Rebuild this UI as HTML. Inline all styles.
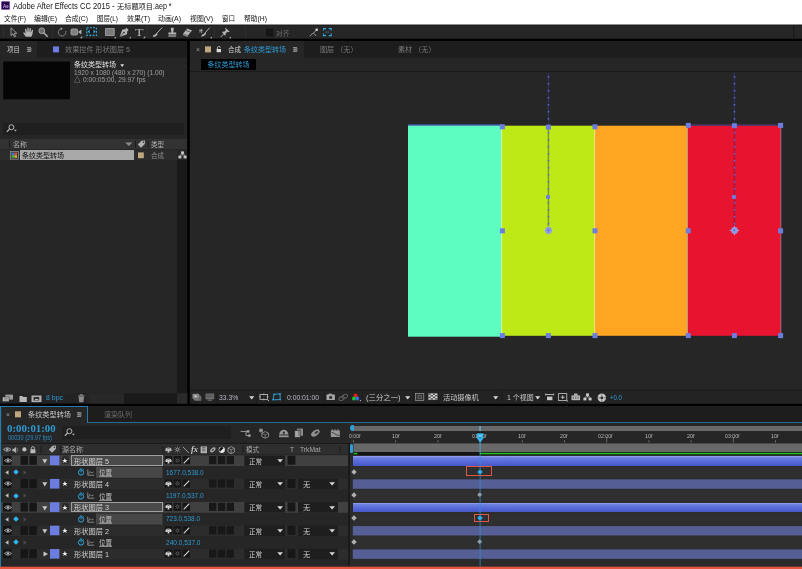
<!DOCTYPE html>
<html lang="zh-CN"><head><meta charset="utf-8"><title>Adobe After Effects CC 2015</title>
<style>
html,body{margin:0;padding:0;background:#262626;}
body{width:802px;height:569px;overflow:hidden;position:relative;font-family:"Liberation Sans","Noto Sans CJK SC",sans-serif;}
#r{position:absolute;left:0;top:0;width:802px;height:569px;background:#262626;filter:blur(0.35px);}
#r div,#r svg{position:absolute;}
.t{position:absolute;white-space:nowrap;line-height:12px;height:12px;transform-origin:0 50%;}
</style></head>
<body><div id="r">
<div style="left:0px;top:24px;width:802px;height:16px;background:#262626;"></div>
<svg style="left:0px;top:24px" width="802" height="2"><rect x="0" y="0.4" width="802" height="1" fill="#181818"/></svg>
<svg style="left:0px;top:0px" width="802" height="25"><rect x="0" y="0" width="802" height="24.5" fill="#ffffff"/></svg>
<svg style="left:0px;top:0px;" width="11" height="11" viewBox="0 0 11 11"><rect x="1.2" y="1.3" width="8.6" height="8.4" rx="0.6" fill="#230646" stroke="#c9a2f2" stroke-width="0.5"/></svg>
<span class="t" style="transform:scaleX(0.8109);left:2.7px;top:-0.5px;font-size:5.4px;color:#d2a6fa;font-weight:bold;">Ae</span>
<span class="t" style="transform:scaleX(0.8625);left:13px;top:0.3px;font-size:8.8px;color:#111;">Adobe After Effects CC 2015 -</span>
<span class="t" style="transform:scaleX(0.9738);left:116.8px;top:0.5px;font-size:7.4px;color:#111;">无标题项目</span>
<span class="t" style="transform:scaleX(0.8087);left:153.2px;top:0.3px;font-size:8.8px;color:#111;">.aep *</span>
<span class="t" style="transform:scaleX(0.9337);left:4px;top:12.8px;font-size:7.2px;color:#111;">文件(F)</span>
<span class="t" style="transform:scaleX(0.9596);left:34px;top:12.8px;font-size:7.2px;color:#111;">编辑(E)</span>
<span class="t" style="transform:scaleX(0.9442);left:65px;top:12.8px;font-size:7.2px;color:#111;">合成(C)</span>
<span class="t" style="transform:scaleX(0.9063);left:97px;top:12.8px;font-size:7.2px;color:#111;">图层(L)</span>
<span class="t" style="transform:scaleX(0.9761);left:127px;top:12.8px;font-size:7.2px;color:#111;">效果(T)</span>
<span class="t" style="transform:scaleX(0.9596);left:158px;top:12.8px;font-size:7.2px;color:#111;">动画(A)</span>
<span class="t" style="transform:scaleX(0.9596);left:190px;top:12.8px;font-size:7.2px;color:#111;">视图(V)</span>
<span class="t" style="transform:scaleX(0.9034);left:222px;top:12.8px;font-size:7.2px;color:#111;">窗口</span>
<span class="t" style="transform:scaleX(0.9442);left:244px;top:12.8px;font-size:7.2px;color:#111;">帮助(H)</span>
<svg style="left:0px;top:38px" width="802" height="4"><rect x="0" y="0.7" width="802" height="2.5" fill="#000"/></svg>
<svg style="left:0px;top:41px" width="187" height="17"><rect x="0" y="0" width="187" height="16.6" fill="#1d1d1d"/></svg>
<svg style="left:0px;top:41px" width="37" height="17"><rect x="0" y="0" width="37" height="16.6" fill="#262626"/></svg>
<svg style="left:187px;top:41px" width="3" height="365"><rect x="0.2" y="0" width="2.6" height="365" fill="#000"/></svg>
<svg style="left:190px;top:41px" width="612" height="17"><rect x="0" y="0" width="612" height="16.6" fill="#1d1d1d"/></svg>
<div style="left:190px;top:41px;width:114px;height:17px;background:#262626;"></div>
<span class="t" style="transform:scaleX(0.9286);left:7px;top:44.0px;font-size:7px;color:#c8c8c8;">项目</span>
<span class="t" style="transform:scaleX(1.2214);left:27px;top:44.0px;font-size:7px;color:#999;">≡</span>
<svg style="left:53px;top:46px" width="6" height="7"><rect x="0" y="0.4" width="6" height="6" fill="#6b7ee0"/></svg>
<span class="t" style="transform:scaleX(1.0189);left:65px;top:44.0px;font-size:7px;color:#7a7a7a;">效果控件 形状图层 5</span>
<span class="t" style="transform:scaleX(0.9771);left:195.5px;top:44.0px;font-size:7px;color:#999;">×</span>
<svg style="left:205px;top:46px" width="6" height="7"><rect x="0" y="0.4" width="6" height="6" fill="#bea87f"/></svg>
<span class="t" style="transform:scaleX(0.9286);left:228px;top:44.0px;font-size:7px;color:#d0d0d0;">合成</span>
<span class="t" style="transform:scaleX(1.0000);left:244px;top:44.0px;font-size:7px;color:#2d9ad4;">条纹类型转场</span>
<span class="t" style="transform:scaleX(1.2214);left:293px;top:44.0px;font-size:7px;color:#999;">≡</span>
<span class="t" style="transform:scaleX(1.0148);left:320px;top:44.0px;font-size:7px;color:#7a7a7a;">图层 （无）</span>
<span class="t" style="transform:scaleX(1.0148);left:398px;top:44.0px;font-size:7px;color:#7a7a7a;">素材 （无）</span>
<svg style="left:3px;top:61px" width="67" height="39"><rect x="0.2" y="0.5" width="66.8" height="37.8" fill="#050505"/></svg>
<span class="t" style="transform:scaleX(1.0000);left:74px;top:59.3px;font-size:7px;color:#e0e0e0;">条纹类型转场</span>
<svg style="left:120px;top:63.6px;" width="5" height="4" viewBox="0 0 5 4"><path d="M0.3 0.3H4.1L2.2 2.9Z" fill="#e0e0e0"/></svg>
<span class="t" style="transform:scaleX(0.8918);left:74px;top:66.6px;font-size:7.4px;color:#a0a0a0;">1920 x 1080  (480 x 270) (1.00)</span>
<span class="t" style="transform:scaleX(0.9286);left:74px;top:73.6px;font-size:7px;color:#b8b8b8;">△</span>
<span class="t" style="transform:scaleX(0.9028);left:82.8px;top:73.6px;font-size:7.4px;color:#a0a0a0;">0:00:05:00, 29.97 fps</span>
<div style="left:3px;top:123px;width:181px;height:12px;background:#1f1f1f;"></div>
<div style="left:0px;top:139px;width:187px;height:10px;background:#323232;"></div>
<div style="left:0px;top:150px;width:177px;height:10px;background:#2c2c2c;"></div>
<svg style="left:177px;top:160px" width="10" height="234"><rect x="0" y="0" width="10" height="233.4" fill="#191919"/></svg>
<span class="t" style="transform:scaleX(1.0769);left:13px;top:139.0px;font-size:6.5px;color:#b0b0b0;">名称</span>
<span class="t" style="transform:scaleX(1.0000);left:151px;top:139.0px;font-size:6.5px;color:#b0b0b0;">类型</span>
<div style="left:20px;top:150px;width:114px;height:10px;background:#a8a8a8;"></div>
<span class="t" style="transform:scaleX(1.0000);left:22px;top:150.0px;font-size:7px;color:#111;">条纹类型转场</span>
<svg style="left:138px;top:152px" width="6" height="7"><rect x="0" y="0.4" width="5.8" height="5.8" fill="#bea87f"/></svg>
<span class="t" style="transform:scaleX(1.0000);left:151px;top:150.0px;font-size:6.5px;color:#8a8a8a;">合成</span>
<svg style="left:0px;top:393px" width="188" height="11"><rect x="0" y="0.4" width="187.2" height="10.2" fill="#232323"/></svg>
<svg style="left:0px;top:403px" width="802" height="4"><rect x="0" y="0.6" width="802" height="2.6" fill="#000"/></svg>
<span class="t" style="transform:scaleX(0.9396);left:46px;top:392.3px;font-size:7.4px;color:#2d9ad4;">8 bpc</span>
<svg style="left:89px;top:393px" width="88" height="11"><rect x="0" y="0.4" width="88" height="10.2" fill="#1a1a1a"/></svg>
<svg style="left:89px;top:393px" width="35" height="11"><rect x="0" y="0.4" width="35" height="10.2" fill="#282828"/></svg>
<svg style="left:177px;top:393px" width="11" height="11"><rect x="0" y="0.4" width="10.2" height="10.2" fill="#2a2a2a"/></svg>
<div style="left:201px;top:59px;width:55px;height:11px;background:#000;"></div>
<span class="t" style="transform:scaleX(1.0000);left:207.5px;top:59.3px;font-size:7px;color:#2d9ad4;">条纹类型转场</span>
<div style="left:190px;top:71px;width:612px;height:1px;background:#1a1a1a;"></div>
<svg style="left:408px;top:125px" width="94" height="212"><rect x="0" y="0.3" width="93.5" height="211.4" fill="#5dfdc2"/></svg>
<svg style="left:501px;top:125px" width="94" height="211"><rect x="0.5" y="0.7" width="93" height="210.1" fill="#bde916"/></svg>
<svg style="left:594px;top:125px" width="94" height="211"><rect x="0.5" y="0.7" width="92.8" height="210.1" fill="#fea621"/></svg>
<svg style="left:687px;top:125px" width="94" height="211"><rect x="0.3" y="0.7" width="93.5" height="210.1" fill="#e8142f"/></svg>
<svg style="left:408px;top:124px" width="94" height="2"><rect x="0" y="0.3" width="93.5" height="1.2" fill="#4a58b8"/></svg>
<svg style="left:687px;top:124px" width="94" height="2"><rect x="0.3" y="0.5" width="93.5" height="1.3" fill="#5a3a7a"/></svg>
<svg style="left:501px;top:126px" width="2" height="210"><rect x="0.1" y="0" width="1" height="210" fill="#dff7b0"/></svg>
<svg style="left:594px;top:126px" width="2" height="210"><rect x="0.1" y="0" width="1" height="210" fill="#f2e68a"/></svg>
<svg style="left:686px;top:126px" width="2" height="210"><rect x="0.9" y="0" width="1" height="210" fill="#c9a08a"/></svg>
<svg style="left:780px;top:126px" width="2" height="210"><rect x="0.3" y="0" width="1" height="210" fill="#b06a80"/></svg>
<svg style="left:547px;top:72px" width="3" height="54"><rect x="0.7" y="0.5" width="1.4" height="53" fill="rgba(52,62,150,0.5)"/></svg>
<svg style="left:547px;top:125px" width="3" height="103"><rect x="0.7" y="0.5" width="1.4" height="102" fill="rgba(30,40,110,0.42)"/></svg>
<svg style="left:546.9px;top:76px;" width="3" height="152" viewBox="0 0 3 152"><line x1="1.5" y1="0.1" x2="1.5" y2="152" stroke="#5a6ad6" stroke-width="1.5" stroke-dasharray="1.5 5.5"/></svg>
<svg style="left:545.4px;top:193.6px;" width="6" height="6" viewBox="0 0 6 6"><circle cx="3" cy="3" r="2.2" fill="#6b7ee0"/></svg>
<svg style="left:542.9px;top:225.1px;" width="11" height="11" viewBox="0 0 11 11"><path d="M5.5 0.2L6.7 4.3L10.8 5.5L6.7 6.7L5.5 10.8L4.3 6.7L0.2 5.5L4.3 4.3Z" fill="#b4bce8"/><circle cx="5.5" cy="5.5" r="3.4" fill="#8f9ae6"/><circle cx="5.3" cy="5.3" r="1" fill="#6470c8"/></svg>
<svg style="left:733px;top:72px" width="3" height="54"><rect x="0.7" y="0.5" width="1.4" height="53" fill="rgba(52,62,150,0.5)"/></svg>
<svg style="left:733px;top:125px" width="3" height="103"><rect x="0.7" y="0.5" width="1.4" height="102" fill="rgba(30,40,110,0.42)"/></svg>
<svg style="left:732.9px;top:76px;" width="3" height="152" viewBox="0 0 3 152"><line x1="1.5" y1="0.1" x2="1.5" y2="152" stroke="#5a6ad6" stroke-width="1.5" stroke-dasharray="1.5 5.5"/></svg>
<svg style="left:731.4px;top:193.6px;" width="6" height="6" viewBox="0 0 6 6"><circle cx="3" cy="3" r="2.2" fill="#6b7ee0"/></svg>
<svg style="left:728.9px;top:225.1px;" width="11" height="11" viewBox="0 0 11 11"><path d="M5.5 0.2L6.7 4.3L10.8 5.5L6.7 6.7L5.5 10.8L4.3 6.7L0.2 5.5L4.3 4.3Z" fill="#b4bce8"/><circle cx="5.5" cy="5.5" r="3.4" fill="#8f9ae6"/><circle cx="5.3" cy="5.3" r="1" fill="#6470c8"/></svg>
<svg style="left:499px;top:124px" width="6" height="6"><rect x="0.9" y="0.3" width="5" height="5" fill="#6b7ee0"/></svg>
<svg style="left:592px;top:124px" width="6" height="6"><rect x="0.5" y="0.3" width="5" height="5" fill="#6b7ee0"/></svg>
<svg style="left:499px;top:228px" width="6" height="6"><rect x="0.9" y="0.3" width="5" height="5" fill="#6b7ee0"/></svg>
<svg style="left:592px;top:228px" width="6" height="6"><rect x="0.5" y="0.3" width="5" height="5" fill="#6b7ee0"/></svg>
<svg style="left:499px;top:333px" width="6" height="6"><rect x="0.9" y="0.1" width="5" height="5" fill="#6b7ee0"/></svg>
<svg style="left:592px;top:333px" width="6" height="6"><rect x="0.5" y="0.1" width="5" height="5" fill="#6b7ee0"/></svg>
<svg style="left:545px;top:124px" width="6" height="6"><rect x="0.9" y="0.6" width="5" height="5" fill="#6b7ee0"/></svg>
<svg style="left:545px;top:333px" width="6" height="6"><rect x="0.9" y="0.1" width="5" height="5" fill="#6b7ee0"/></svg>
<svg style="left:685px;top:122px" width="6" height="6"><rect x="0.8" y="0.9" width="5" height="5" fill="#6b7ee0"/></svg>
<svg style="left:778px;top:122px" width="6" height="6"><rect x="0.1" y="0.9" width="5" height="5" fill="#6b7ee0"/></svg>
<svg style="left:685px;top:228px" width="6" height="6"><rect x="0.8" y="0.3" width="5" height="5" fill="#6b7ee0"/></svg>
<svg style="left:778px;top:228px" width="6" height="6"><rect x="0.1" y="0.3" width="5" height="5" fill="#6b7ee0"/></svg>
<svg style="left:685px;top:333px" width="6" height="6"><rect x="0.8" y="0.1" width="5" height="5" fill="#6b7ee0"/></svg>
<svg style="left:778px;top:333px" width="6" height="6"><rect x="0.1" y="0.1" width="5" height="5" fill="#6b7ee0"/></svg>
<svg style="left:731px;top:123px" width="6" height="6"><rect x="0.9" y="0.2" width="5" height="5" fill="#6b7ee0"/></svg>
<svg style="left:731px;top:333px" width="6" height="6"><rect x="0.9" y="0.1" width="5" height="5" fill="#6b7ee0"/></svg>
<svg style="left:190px;top:389px" width="612" height="2"><rect x="0" y="0.7" width="612" height="1.1" fill="#181818"/></svg>
<svg style="left:190px;top:390px" width="612" height="14"><rect x="0" y="0.5" width="612" height="13.1" fill="#232323"/></svg>
<span class="t" style="transform:scaleX(0.8911);left:219.3px;top:391.9px;font-size:7.6px;color:#b8b8c8;">33.3%</span>
<span class="t" style="transform:scaleX(0.8912);left:287px;top:391.9px;font-size:7.6px;color:#b8b8c8;">0:00:01:00</span>
<span class="t" style="transform:scaleX(1.0590);left:366.4px;top:391.9px;font-size:7px;color:#c8c8c8;">(三分之一)</span>
<span class="t" style="transform:scaleX(1.0200);left:442.8px;top:391.9px;font-size:7px;color:#c8c8c8;">活动摄像机</span>
<span class="t" style="transform:scaleX(0.9909);left:506.6px;top:391.9px;font-size:7px;color:#c8c8c8;">1 个视图</span>
<span class="t" style="transform:scaleX(0.9209);left:610px;top:391.9px;font-size:6.6px;color:#2d9ad4;">+0.0</span>
<div style="left:0px;top:406px;width:802px;height:16px;background:#1d1d1d;"></div>
<div style="left:0px;top:406px;width:88px;height:17px;background:#262626;"></div>
<div style="left:0px;top:406px;width:88px;height:1px;background:#2a7aa8;"></div>
<div style="left:87px;top:406px;width:1px;height:17px;background:#2a7aa8;"></div>
<div style="left:87px;top:422px;width:715px;height:1px;background:#256c93;"></div>
<svg style="left:0px;top:406px" width="2" height="161"><rect x="0" y="0" width="1.2" height="161" fill="#2a7aa8"/></svg>
<span class="t" style="transform:scaleX(0.9771);left:6px;top:409.0px;font-size:7px;color:#999;">×</span>
<svg style="left:15px;top:411px" width="6" height="7"><rect x="0" y="0.3" width="6" height="6" fill="#bea87f"/></svg>
<span class="t" style="transform:scaleX(1.0238);left:28px;top:409.0px;font-size:7px;color:#c8c8c8;">条纹类型转场</span>
<span class="t" style="transform:scaleX(1.2214);left:77px;top:409.0px;font-size:7px;color:#999;">≡</span>
<span class="t" style="transform:scaleX(1.0000);left:104px;top:409.0px;font-size:7px;color:#6e6e6e;">渲染队列</span>
<span class="t" style="transform:scaleX(1.1026);left:6.5px;top:423.0px;font-size:9.8px;color:#2d9ad4;font-weight:bold;font-family:'Liberation Serif',serif;">0:00:01:00</span>
<span class="t" style="transform:scaleX(0.8911);left:7.9px;top:432.3px;font-size:6.3px;color:#2a8cc4;">00030 (29.97 fps)</span>
<div style="left:62px;top:426px;width:169px;height:13px;background:#1f1f1f;"></div>
<div style="left:1px;top:443px;width:348px;height:1px;background:#1a1a1a;"></div>
<div style="left:1px;top:444px;width:348px;height:10px;background:#2e2e2e;"></div>
<span class="t" style="transform:scaleX(1.0000);left:62px;top:444.0px;font-size:7px;color:#a8a8a8;">源名称</span>
<span class="t" style="transform:scaleX(0.9286);left:246px;top:444.0px;font-size:7px;color:#a8a8a8;">模式</span>
<span class="t" style="transform:scaleX(0.9110);left:290px;top:444.0px;font-size:7.2px;color:#a8a8a8;">T</span>
<span class="t" style="transform:scaleX(0.9279);left:300px;top:444.0px;font-size:7.2px;color:#a8a8a8;">TrkMat</span>
<div style="left:349px;top:443px;width:453px;height:124px;background:#2d2d2d;"></div>
<svg style="left:348px;top:443px" width="2" height="124"><rect x="0.4" y="0" width="1.4" height="124" fill="#161616"/></svg>
<div style="left:350px;top:423px;width:3px;height:144px;background:#2a2a2a;"></div>
<div style="left:353px;top:423px;width:449px;height:20px;background:#262626;"></div>
<svg style="left:353px;top:426px" width="450" height="5"><rect x="0.5" y="0" width="449" height="5" fill="#686868"/></svg>
<svg style="left:353px;top:443px" width="450" height="9"><rect x="0.5" y="0.5" width="449" height="8.5" fill="#686868"/></svg>
<div style="left:353px;top:452px;width:449px;height:3px;background:#151515;"></div>
<svg style="left:353px;top:452px" width="5" height="3"><rect x="0.5" y="0.8" width="4" height="1.5" fill="#1fc01f"/></svg>
<svg style="left:480px;top:452px" width="322" height="3"><rect x="0" y="0.8" width="322" height="1.5" fill="#1fc01f"/></svg>
<div style="left:349.5px;top:425px;width:4px;height:6px;background:#2d9fd8;border-radius:3px 0 0 3px;"></div>
<div style="left:349.5px;top:443.5px;width:3.5px;height:9px;background:#2d9fd8;border-radius:2px;"></div>
<svg style="left:353px;top:440px" width="1" height="3"><rect x="0" y="0.3" width="1" height="2.1" fill="#707070"/></svg>
<span class="t" style="transform:scaleX(1.0337);left:349.3px;top:429.9px;font-size:5px;color:#b8b8b8;">0:00f</span>
<svg style="left:395px;top:440px" width="2" height="3"><rect x="0.2" y="0.3" width="1" height="2.1" fill="#707070"/></svg>
<span class="t" style="transform:scaleX(1.0930);left:391.5px;top:429.9px;font-size:5px;color:#b8b8b8;">10f</span>
<svg style="left:437px;top:440px" width="2" height="3"><rect x="0.4" y="0.3" width="1" height="2.1" fill="#707070"/></svg>
<span class="t" style="transform:scaleX(1.0930);left:433.7px;top:429.9px;font-size:5px;color:#b8b8b8;">20f</span>
<svg style="left:479px;top:437px" width="2" height="6"><rect x="0.6" y="0" width="1" height="5.4" fill="#6a6a6a"/></svg>
<span class="t" style="transform:scaleX(1.0427);left:471.5px;top:429.9px;font-size:5px;color:#b8b8b8;">01:00f</span>
<svg style="left:521px;top:440px" width="2" height="3"><rect x="0.8" y="0.3" width="1" height="2.1" fill="#707070"/></svg>
<span class="t" style="transform:scaleX(1.0930);left:518.0999999999999px;top:429.9px;font-size:5px;color:#b8b8b8;">10f</span>
<svg style="left:564px;top:440px" width="1" height="3"><rect x="0" y="0.3" width="1" height="2.1" fill="#707070"/></svg>
<span class="t" style="transform:scaleX(1.0930);left:560.3px;top:429.9px;font-size:5px;color:#b8b8b8;">20f</span>
<svg style="left:606px;top:437px" width="2" height="6"><rect x="0.2" y="0" width="1" height="5.4" fill="#6a6a6a"/></svg>
<span class="t" style="transform:scaleX(1.0427);left:598.1px;top:429.9px;font-size:5px;color:#b8b8b8;">02:00f</span>
<svg style="left:648px;top:440px" width="2" height="3"><rect x="0.4" y="0.3" width="1" height="2.1" fill="#707070"/></svg>
<span class="t" style="transform:scaleX(1.0930);left:644.6999999999999px;top:429.9px;font-size:5px;color:#b8b8b8;">10f</span>
<svg style="left:690px;top:440px" width="2" height="3"><rect x="0.6" y="0.3" width="1" height="2.1" fill="#707070"/></svg>
<span class="t" style="transform:scaleX(1.0930);left:686.9px;top:429.9px;font-size:5px;color:#b8b8b8;">20f</span>
<svg style="left:732px;top:437px" width="2" height="6"><rect x="0.8" y="0" width="1" height="5.4" fill="#6a6a6a"/></svg>
<span class="t" style="transform:scaleX(1.0427);left:724.6999999999999px;top:429.9px;font-size:5px;color:#b8b8b8;">03:00f</span>
<svg style="left:775px;top:440px" width="1" height="3"><rect x="0" y="0.3" width="1" height="2.1" fill="#707070"/></svg>
<span class="t" style="transform:scaleX(1.0930);left:771.3px;top:429.9px;font-size:5px;color:#b8b8b8;">10f</span>
<svg style="left:1px;top:455px" width="347" height="12"><rect x="0" y="0.2" width="347" height="10.88" fill="#404040"/></svg>
<svg style="left:3px;top:455px" width="9" height="10"><rect x="0" y="0.8" width="8.5" height="9" fill="#141414"/></svg>
<svg style="left:3.5px;top:456.8px;" width="8" height="7" viewBox="0 0 8 7"><path d="M0.5 3.5Q4 0.3 7.5 3.5Q4 6.7 0.5 3.5Z" fill="none" stroke="#b0b0b0" stroke-width="0.9"/><circle cx="4" cy="3.5" r="1.2" fill="#b0b0b0"/></svg>
<svg style="left:20px;top:455px" width="8" height="10"><rect x="0.5" y="0.8" width="7.5" height="9" fill="#161616"/></svg>
<svg style="left:29px;top:455px" width="8" height="10"><rect x="0.3" y="0.8" width="7.5" height="9" fill="#161616"/></svg>
<svg style="left:42.2px;top:459.03999999999996px;" width="6" height="6" viewBox="0 0 6 6"><path d="M0.3 0.3H5.3L2.8 4.6Z" fill="#c8c8c8"/></svg>
<svg style="left:50px;top:455px" width="10" height="11"><rect x="0" y="0.6" width="9.4" height="9.6" fill="#6b7ee0"/></svg>
<div style="left:61.6px;top:456.2px;width:7.2px;height:8px;background:#2a2a2a;border-radius:2px;"></div>
<span class="t" style="transform:scaleX(1.0340);left:62.4px;top:453.84px;font-size:5.6px;color:#f4f4f4;">★</span>
<div style="left:71px;top:455.3px;width:91.5px;height:10.48px;background:#4a4a4a;box-sizing:border-box;border:1px solid #a0a0a0;"></div>
<span class="t" style="transform:scaleX(1.0342);left:74px;top:455.64px;font-size:7px;color:#d0d0d0;">形状图层 5</span>
<svg style="left:164px;top:456px" width="9" height="9"><rect x="0.7" y="0" width="7.6" height="8.2" fill="#161616"/></svg>
<svg style="left:173px;top:456px" width="9" height="9"><rect x="0.6" y="0" width="7.6" height="8.2" fill="#161616"/></svg>
<svg style="left:182px;top:456px" width="9" height="9"><rect x="0.5" y="0" width="7.6" height="8.2" fill="#161616"/></svg>
<svg style="left:165px;top:456.6px;" width="7" height="7" viewBox="0 0 7 7"><path d="M0.3 4.6A3.2 3.2 0 0 1 6.7 4.6L5.6 5.2L4.4 4.4V6.4H2.6V4.4L1.4 5.2Z" fill="#d0d0d0"/><path d="M2.2 3.2A1.4 1.4 0 0 1 4.8 3.2" stroke="#222" stroke-width="0.6" fill="none"/></svg>
<svg style="left:174px;top:456.6px;" width="7" height="7" viewBox="0 0 7 7"><circle cx="3.5" cy="3.5" r="1.3" fill="none" stroke="#6c6c6c" stroke-width="0.7"/><path d="M3.5 0.9V1.6M3.5 5.4V6.1M0.9 3.5H1.6M5.4 3.5H6.1M1.7 1.7L2.2 2.2M4.8 4.8L5.3 5.3M5.3 1.7L4.8 2.2M2.2 4.8L1.7 5.3" stroke="#6c6c6c" stroke-width="0.6"/></svg>
<svg style="left:183px;top:456.6px;" width="7" height="7" viewBox="0 0 7 7"><path d="M0.7 6.3L6.3 0.7" stroke="#d4d4d4" stroke-width="1.15"/></svg>
<svg style="left:209px;top:456px" width="8" height="9"><rect x="0" y="0" width="7.4" height="8.2" fill="#181818"/></svg>
<svg style="left:217px;top:456px" width="9" height="9"><rect x="0.9" y="0" width="7.4" height="8.2" fill="#181818"/></svg>
<svg style="left:226px;top:456px" width="8" height="9"><rect x="0.6" y="0" width="7.4" height="8.2" fill="#181818"/></svg>
<svg style="left:244px;top:455px" width="41" height="11"><rect x="0.3" y="0.4" width="40.7" height="10.48" fill="#1e1e1e"/></svg>
<span class="t" style="transform:scaleX(0.9286);left:248.5px;top:455.64px;font-size:7px;color:#d0d0d0;">正常</span>
<svg style="left:277px;top:458.84px;" width="7" height="5" viewBox="0 0 7 5"><path d="M0.3 0.3H6L3.1 3.6Z" fill="#d8d8d8"/></svg>
<svg style="left:287px;top:455px" width="9" height="10"><rect x="0.6" y="0.7" width="7.8" height="9" fill="#171717"/></svg>
<div style="left:352.8px;top:456px;width:450px;height:9.6px;background:#5a6cd6;background:linear-gradient(#98a2ec 0%,#6c7ee0 18%,#5568d6 60%,#4658c6 100%);"></div>
<svg style="left:1px;top:466px" width="347" height="13"><rect x="0" y="0.48" width="347" height="11.68" fill="#262626"/></svg>
<svg style="left:96px;top:466px" width="67" height="12"><rect x="0" y="0.78" width="66.5" height="11.08" fill="#474747"/></svg>
<svg style="left:4.5px;top:469.82px;" width="4" height="5" viewBox="0 0 4 5"><path d="M3.5 0.3V4.7L0.3 2.5Z" fill="#c0c0c0"/></svg>
<svg style="left:12.5px;top:469.32px;" width="6" height="6" viewBox="0 0 6 6"><path d="M3 0.2L5.8 3L3 5.8L0.2 3Z" fill="#2eb4f0"/></svg>
<svg style="left:22.5px;top:469.82px;" width="4" height="5" viewBox="0 0 4 5"><path d="M0.5 0.3V4.7L3.7 2.5Z" fill="#4a4a4a"/></svg>
<svg style="left:76.5px;top:468.32px;" width="8" height="8" viewBox="0 0 8 8"><circle cx="4" cy="4.5" r="2.6" fill="none" stroke="#2eaae6" stroke-width="1"/><path d="M4 4.5V3M2.8 0.9H5.2M6 2L6.8 1.2" stroke="#2eaae6" stroke-width="0.8" fill="none"/></svg>
<svg style="left:87px;top:468.82px;" width="8" height="7" viewBox="0 0 8 7"><path d="M0.8 0.5V6.2H7.2" stroke="#a0a0a0" stroke-width="0.8" fill="none"/><path d="M1.5 5L3 2.5L4.5 4L6.5 3" stroke="#a0a0a0" stroke-width="0.7" fill="none"/></svg>
<span class="t" style="transform:scaleX(0.9286);left:99px;top:467.32px;font-size:7px;color:#c0c0c0;text-decoration:underline;text-decoration-color:#888;">位置</span>
<span class="t" style="transform:scaleX(0.8502);left:165.8px;top:466.72px;font-size:7.6px;color:#2d9ad4;">1677.0,538.0</span>
<svg style="left:353px;top:466px" width="450" height="13"><rect x="0.5" y="0.48" width="449" height="11.68" fill="#2f2f2f"/></svg>
<svg style="left:350.7px;top:468.71999999999997px;" width="6" height="6" viewBox="0 0 6 6"><path d="M3 0.3L5.7 3L3 5.7L0.3 3Z" fill="#b0b0b0"/></svg>
<div style="left:466.3px;top:466.28px;width:26px;height:9.6px;background:transparent;box-sizing:border-box;border:1.2px solid #e05844;"></div>
<svg style="left:477.1px;top:468.52px;" width="6" height="6" viewBox="0 0 6 6"><path d="M3 0.3L5.7 3L3 5.7L0.3 3Z" fill="#30b8f4"/></svg>
<svg style="left:1px;top:478px" width="347" height="12"><rect x="0" y="0.56" width="347" height="10.88" fill="#2c2c2c"/></svg>
<svg style="left:3px;top:479px" width="9" height="10"><rect x="0" y="0.16" width="8.5" height="9" fill="#141414"/></svg>
<svg style="left:3.5px;top:480.16px;" width="8" height="7" viewBox="0 0 8 7"><path d="M0.5 3.5Q4 0.3 7.5 3.5Q4 6.7 0.5 3.5Z" fill="none" stroke="#b0b0b0" stroke-width="0.9"/><circle cx="4" cy="3.5" r="1.2" fill="#b0b0b0"/></svg>
<svg style="left:20px;top:479px" width="8" height="10"><rect x="0.5" y="0.16" width="7.5" height="9" fill="#161616"/></svg>
<svg style="left:29px;top:479px" width="8" height="10"><rect x="0.3" y="0.16" width="7.5" height="9" fill="#161616"/></svg>
<svg style="left:42.2px;top:482.4px;" width="6" height="6" viewBox="0 0 6 6"><path d="M0.3 0.3H5.3L2.8 4.6Z" fill="#c8c8c8"/></svg>
<svg style="left:50px;top:478px" width="10" height="11"><rect x="0" y="0.96" width="9.4" height="9.6" fill="#6b7ee0"/></svg>
<div style="left:61.6px;top:479.56px;width:7.2px;height:8px;background:#2a2a2a;border-radius:2px;"></div>
<span class="t" style="transform:scaleX(1.0340);left:62.4px;top:477.2px;font-size:5.6px;color:#f4f4f4;">★</span>
<span class="t" style="transform:scaleX(1.0342);left:74px;top:479.0px;font-size:7px;color:#d0d0d0;">形状图层 4</span>
<svg style="left:164px;top:479px" width="9" height="9"><rect x="0.7" y="0.36" width="7.6" height="8.2" fill="#161616"/></svg>
<svg style="left:173px;top:479px" width="9" height="9"><rect x="0.6" y="0.36" width="7.6" height="8.2" fill="#161616"/></svg>
<svg style="left:182px;top:479px" width="9" height="9"><rect x="0.5" y="0.36" width="7.6" height="8.2" fill="#161616"/></svg>
<svg style="left:165px;top:479.96000000000004px;" width="7" height="7" viewBox="0 0 7 7"><path d="M0.3 4.6A3.2 3.2 0 0 1 6.7 4.6L5.6 5.2L4.4 4.4V6.4H2.6V4.4L1.4 5.2Z" fill="#d0d0d0"/><path d="M2.2 3.2A1.4 1.4 0 0 1 4.8 3.2" stroke="#222" stroke-width="0.6" fill="none"/></svg>
<svg style="left:174px;top:479.96000000000004px;" width="7" height="7" viewBox="0 0 7 7"><circle cx="3.5" cy="3.5" r="1.3" fill="none" stroke="#6c6c6c" stroke-width="0.7"/><path d="M3.5 0.9V1.6M3.5 5.4V6.1M0.9 3.5H1.6M5.4 3.5H6.1M1.7 1.7L2.2 2.2M4.8 4.8L5.3 5.3M5.3 1.7L4.8 2.2M2.2 4.8L1.7 5.3" stroke="#6c6c6c" stroke-width="0.6"/></svg>
<svg style="left:183px;top:479.96000000000004px;" width="7" height="7" viewBox="0 0 7 7"><path d="M0.7 6.3L6.3 0.7" stroke="#d4d4d4" stroke-width="1.15"/></svg>
<svg style="left:209px;top:479px" width="8" height="9"><rect x="0" y="0.36" width="7.4" height="8.2" fill="#181818"/></svg>
<svg style="left:217px;top:479px" width="9" height="9"><rect x="0.9" y="0.36" width="7.4" height="8.2" fill="#181818"/></svg>
<svg style="left:226px;top:479px" width="8" height="9"><rect x="0.6" y="0.36" width="7.4" height="8.2" fill="#181818"/></svg>
<svg style="left:244px;top:478px" width="41" height="12"><rect x="0.3" y="0.76" width="40.7" height="10.48" fill="#1e1e1e"/></svg>
<span class="t" style="transform:scaleX(0.9286);left:248.5px;top:479.0px;font-size:7px;color:#d0d0d0;">正常</span>
<svg style="left:277px;top:482.2px;" width="7" height="5" viewBox="0 0 7 5"><path d="M0.3 0.3H6L3.1 3.6Z" fill="#d8d8d8"/></svg>
<svg style="left:287px;top:479px" width="9" height="10"><rect x="0.6" y="0.06" width="7.8" height="9" fill="#171717"/></svg>
<svg style="left:298px;top:478px" width="40" height="12"><rect x="0" y="0.76" width="40" height="10.48" fill="#1e1e1e"/></svg>
<span class="t" style="transform:scaleX(1.0429);left:302.7px;top:479.0px;font-size:7px;color:#d0d0d0;">无</span>
<svg style="left:329px;top:482.2px;" width="7" height="5" viewBox="0 0 7 5"><path d="M0.3 0.3H6L3.1 3.6Z" fill="#d8d8d8"/></svg>
<svg style="left:352px;top:479px" width="451" height="10"><rect x="0.8" y="0.36" width="450" height="9.4" fill="#565e96"/></svg>
<svg style="left:1px;top:489px" width="347" height="13"><rect x="0" y="0.84" width="347" height="11.68" fill="#262626"/></svg>
<svg style="left:4.5px;top:493.18px;" width="4" height="5" viewBox="0 0 4 5"><path d="M3.5 0.3V4.7L0.3 2.5Z" fill="#c0c0c0"/></svg>
<svg style="left:12.5px;top:492.68px;" width="6" height="6" viewBox="0 0 6 6"><path d="M3 0.2L5.8 3L3 5.8L0.2 3Z" fill="#2eb4f0"/></svg>
<svg style="left:22.5px;top:493.18px;" width="4" height="5" viewBox="0 0 4 5"><path d="M0.5 0.3V4.7L3.7 2.5Z" fill="#4a4a4a"/></svg>
<svg style="left:76.5px;top:491.68px;" width="8" height="8" viewBox="0 0 8 8"><circle cx="4" cy="4.5" r="2.6" fill="none" stroke="#2eaae6" stroke-width="1"/><path d="M4 4.5V3M2.8 0.9H5.2M6 2L6.8 1.2" stroke="#2eaae6" stroke-width="0.8" fill="none"/></svg>
<svg style="left:87px;top:492.18px;" width="8" height="7" viewBox="0 0 8 7"><path d="M0.8 0.5V6.2H7.2" stroke="#a0a0a0" stroke-width="0.8" fill="none"/><path d="M1.5 5L3 2.5L4.5 4L6.5 3" stroke="#a0a0a0" stroke-width="0.7" fill="none"/></svg>
<span class="t" style="transform:scaleX(0.9286);left:99px;top:490.68px;font-size:7px;color:#c0c0c0;text-decoration:underline;text-decoration-color:#888;">位置</span>
<span class="t" style="transform:scaleX(0.8611);left:165.8px;top:490.08px;font-size:7.6px;color:#2d9ad4;">1197.0,537.0</span>
<svg style="left:353px;top:489px" width="450" height="13"><rect x="0.5" y="0.84" width="449" height="11.68" fill="#2f2f2f"/></svg>
<svg style="left:350.7px;top:492.08px;" width="6" height="6" viewBox="0 0 6 6"><path d="M3 0.3L5.7 3L3 5.7L0.3 3Z" fill="#b0b0b0"/></svg>
<svg style="left:477.4px;top:492.18px;" width="5.4" height="5.4" viewBox="0 0 5.4 5.4"><path d="M2.7 0.3L5.1 2.7L2.7 5.1L0.3 2.7Z" fill="#a8a8a8"/></svg>
<svg style="left:1px;top:501px" width="347" height="12"><rect x="0" y="0.92" width="347" height="10.88" fill="#404040"/></svg>
<svg style="left:3px;top:502px" width="9" height="10"><rect x="0" y="0.52" width="8.5" height="9" fill="#141414"/></svg>
<svg style="left:3.5px;top:503.52px;" width="8" height="7" viewBox="0 0 8 7"><path d="M0.5 3.5Q4 0.3 7.5 3.5Q4 6.7 0.5 3.5Z" fill="none" stroke="#b0b0b0" stroke-width="0.9"/><circle cx="4" cy="3.5" r="1.2" fill="#b0b0b0"/></svg>
<svg style="left:20px;top:502px" width="8" height="10"><rect x="0.5" y="0.52" width="7.5" height="9" fill="#161616"/></svg>
<svg style="left:29px;top:502px" width="8" height="10"><rect x="0.3" y="0.52" width="7.5" height="9" fill="#161616"/></svg>
<svg style="left:42.2px;top:505.75999999999993px;" width="6" height="6" viewBox="0 0 6 6"><path d="M0.3 0.3H5.3L2.8 4.6Z" fill="#c8c8c8"/></svg>
<svg style="left:50px;top:502px" width="10" height="10"><rect x="0" y="0.32" width="9.4" height="9.6" fill="#6b7ee0"/></svg>
<div style="left:61.6px;top:502.92px;width:7.2px;height:8px;background:#2a2a2a;border-radius:2px;"></div>
<span class="t" style="transform:scaleX(1.0340);left:62.4px;top:500.56px;font-size:5.6px;color:#f4f4f4;">★</span>
<div style="left:71px;top:502.02px;width:91.5px;height:10.48px;background:#4a4a4a;box-sizing:border-box;border:1px solid #a0a0a0;"></div>
<span class="t" style="transform:scaleX(1.0342);left:74px;top:502.36px;font-size:7px;color:#d0d0d0;">形状图层 3</span>
<svg style="left:164px;top:502px" width="9" height="9"><rect x="0.7" y="0.72" width="7.6" height="8.2" fill="#161616"/></svg>
<svg style="left:173px;top:502px" width="9" height="9"><rect x="0.6" y="0.72" width="7.6" height="8.2" fill="#161616"/></svg>
<svg style="left:182px;top:502px" width="9" height="9"><rect x="0.5" y="0.72" width="7.6" height="8.2" fill="#161616"/></svg>
<svg style="left:165px;top:503.32px;" width="7" height="7" viewBox="0 0 7 7"><path d="M0.3 4.6A3.2 3.2 0 0 1 6.7 4.6L5.6 5.2L4.4 4.4V6.4H2.6V4.4L1.4 5.2Z" fill="#d0d0d0"/><path d="M2.2 3.2A1.4 1.4 0 0 1 4.8 3.2" stroke="#222" stroke-width="0.6" fill="none"/></svg>
<svg style="left:174px;top:503.32px;" width="7" height="7" viewBox="0 0 7 7"><circle cx="3.5" cy="3.5" r="1.3" fill="none" stroke="#6c6c6c" stroke-width="0.7"/><path d="M3.5 0.9V1.6M3.5 5.4V6.1M0.9 3.5H1.6M5.4 3.5H6.1M1.7 1.7L2.2 2.2M4.8 4.8L5.3 5.3M5.3 1.7L4.8 2.2M2.2 4.8L1.7 5.3" stroke="#6c6c6c" stroke-width="0.6"/></svg>
<svg style="left:183px;top:503.32px;" width="7" height="7" viewBox="0 0 7 7"><path d="M0.7 6.3L6.3 0.7" stroke="#d4d4d4" stroke-width="1.15"/></svg>
<svg style="left:209px;top:502px" width="8" height="9"><rect x="0" y="0.72" width="7.4" height="8.2" fill="#181818"/></svg>
<svg style="left:217px;top:502px" width="9" height="9"><rect x="0.9" y="0.72" width="7.4" height="8.2" fill="#181818"/></svg>
<svg style="left:226px;top:502px" width="8" height="9"><rect x="0.6" y="0.72" width="7.4" height="8.2" fill="#181818"/></svg>
<svg style="left:244px;top:502px" width="41" height="11"><rect x="0.3" y="0.12" width="40.7" height="10.48" fill="#1e1e1e"/></svg>
<span class="t" style="transform:scaleX(0.9286);left:248.5px;top:502.36px;font-size:7px;color:#d0d0d0;">正常</span>
<svg style="left:277px;top:505.55999999999995px;" width="7" height="5" viewBox="0 0 7 5"><path d="M0.3 0.3H6L3.1 3.6Z" fill="#d8d8d8"/></svg>
<svg style="left:287px;top:502px" width="9" height="10"><rect x="0.6" y="0.42" width="7.8" height="9" fill="#171717"/></svg>
<svg style="left:298px;top:502px" width="40" height="11"><rect x="0" y="0.12" width="40" height="10.48" fill="#1e1e1e"/></svg>
<span class="t" style="transform:scaleX(1.0429);left:302.7px;top:502.36px;font-size:7px;color:#d0d0d0;">无</span>
<svg style="left:329px;top:505.55999999999995px;" width="7" height="5" viewBox="0 0 7 5"><path d="M0.3 0.3H6L3.1 3.6Z" fill="#d8d8d8"/></svg>
<div style="left:352.8px;top:502.72px;width:450px;height:9.6px;background:#5a6cd6;background:linear-gradient(#98a2ec 0%,#6c7ee0 18%,#5568d6 60%,#4658c6 100%);"></div>
<svg style="left:1px;top:513px" width="347" height="12"><rect x="0" y="0.2" width="347" height="11.68" fill="#262626"/></svg>
<svg style="left:96px;top:513px" width="67" height="12"><rect x="0" y="0.5" width="66.5" height="11.08" fill="#474747"/></svg>
<svg style="left:4.5px;top:516.5400000000001px;" width="4" height="5" viewBox="0 0 4 5"><path d="M3.5 0.3V4.7L0.3 2.5Z" fill="#c0c0c0"/></svg>
<svg style="left:12.5px;top:516.0400000000001px;" width="6" height="6" viewBox="0 0 6 6"><path d="M3 0.2L5.8 3L3 5.8L0.2 3Z" fill="#2eb4f0"/></svg>
<svg style="left:22.5px;top:516.5400000000001px;" width="4" height="5" viewBox="0 0 4 5"><path d="M0.5 0.3V4.7L3.7 2.5Z" fill="#4a4a4a"/></svg>
<svg style="left:76.5px;top:515.0400000000001px;" width="8" height="8" viewBox="0 0 8 8"><circle cx="4" cy="4.5" r="2.6" fill="none" stroke="#2eaae6" stroke-width="1"/><path d="M4 4.5V3M2.8 0.9H5.2M6 2L6.8 1.2" stroke="#2eaae6" stroke-width="0.8" fill="none"/></svg>
<svg style="left:87px;top:515.5400000000001px;" width="8" height="7" viewBox="0 0 8 7"><path d="M0.8 0.5V6.2H7.2" stroke="#a0a0a0" stroke-width="0.8" fill="none"/><path d="M1.5 5L3 2.5L4.5 4L6.5 3" stroke="#a0a0a0" stroke-width="0.7" fill="none"/></svg>
<span class="t" style="transform:scaleX(0.9286);left:99px;top:514.04px;font-size:7px;color:#c0c0c0;text-decoration:underline;text-decoration-color:#888;">位置</span>
<span class="t" style="transform:scaleX(0.8474);left:165.8px;top:513.44px;font-size:7.6px;color:#2d9ad4;">723.0,538.0</span>
<svg style="left:353px;top:513px" width="450" height="12"><rect x="0.5" y="0.2" width="449" height="11.68" fill="#2f2f2f"/></svg>
<svg style="left:350.7px;top:515.44px;" width="6" height="6" viewBox="0 0 6 6"><path d="M3 0.3L5.7 3L3 5.7L0.3 3Z" fill="#b0b0b0"/></svg>
<div style="left:474px;top:513.7px;width:15px;height:8.6px;background:transparent;box-sizing:border-box;border:1.2px solid #e05844;"></div>
<svg style="left:477.1px;top:515.2400000000001px;" width="6" height="6" viewBox="0 0 6 6"><path d="M3 0.3L5.7 3L3 5.7L0.3 3Z" fill="#30b8f4"/></svg>
<svg style="left:1px;top:525px" width="347" height="12"><rect x="0" y="0.28" width="347" height="10.88" fill="#2c2c2c"/></svg>
<svg style="left:3px;top:525px" width="9" height="10"><rect x="0" y="0.88" width="8.5" height="9" fill="#141414"/></svg>
<svg style="left:3.5px;top:526.88px;" width="8" height="7" viewBox="0 0 8 7"><path d="M0.5 3.5Q4 0.3 7.5 3.5Q4 6.7 0.5 3.5Z" fill="none" stroke="#b0b0b0" stroke-width="0.9"/><circle cx="4" cy="3.5" r="1.2" fill="#b0b0b0"/></svg>
<svg style="left:20px;top:525px" width="8" height="10"><rect x="0.5" y="0.88" width="7.5" height="9" fill="#161616"/></svg>
<svg style="left:29px;top:525px" width="8" height="10"><rect x="0.3" y="0.88" width="7.5" height="9" fill="#161616"/></svg>
<svg style="left:42.2px;top:529.12px;" width="6" height="6" viewBox="0 0 6 6"><path d="M0.3 0.3H5.3L2.8 4.6Z" fill="#c8c8c8"/></svg>
<svg style="left:50px;top:525px" width="10" height="11"><rect x="0" y="0.68" width="9.4" height="9.6" fill="#6b7ee0"/></svg>
<div style="left:61.6px;top:526.28px;width:7.2px;height:8px;background:#2a2a2a;border-radius:2px;"></div>
<span class="t" style="transform:scaleX(1.0340);left:62.4px;top:523.92px;font-size:5.6px;color:#f4f4f4;">★</span>
<span class="t" style="transform:scaleX(1.0342);left:74px;top:525.72px;font-size:7px;color:#d0d0d0;">形状图层 2</span>
<svg style="left:164px;top:526px" width="9" height="9"><rect x="0.7" y="0.08" width="7.6" height="8.2" fill="#161616"/></svg>
<svg style="left:173px;top:526px" width="9" height="9"><rect x="0.6" y="0.08" width="7.6" height="8.2" fill="#161616"/></svg>
<svg style="left:182px;top:526px" width="9" height="9"><rect x="0.5" y="0.08" width="7.6" height="8.2" fill="#161616"/></svg>
<svg style="left:165px;top:526.68px;" width="7" height="7" viewBox="0 0 7 7"><path d="M0.3 4.6A3.2 3.2 0 0 1 6.7 4.6L5.6 5.2L4.4 4.4V6.4H2.6V4.4L1.4 5.2Z" fill="#d0d0d0"/><path d="M2.2 3.2A1.4 1.4 0 0 1 4.8 3.2" stroke="#222" stroke-width="0.6" fill="none"/></svg>
<svg style="left:174px;top:526.68px;" width="7" height="7" viewBox="0 0 7 7"><circle cx="3.5" cy="3.5" r="1.3" fill="none" stroke="#6c6c6c" stroke-width="0.7"/><path d="M3.5 0.9V1.6M3.5 5.4V6.1M0.9 3.5H1.6M5.4 3.5H6.1M1.7 1.7L2.2 2.2M4.8 4.8L5.3 5.3M5.3 1.7L4.8 2.2M2.2 4.8L1.7 5.3" stroke="#6c6c6c" stroke-width="0.6"/></svg>
<svg style="left:183px;top:526.68px;" width="7" height="7" viewBox="0 0 7 7"><path d="M0.7 6.3L6.3 0.7" stroke="#d4d4d4" stroke-width="1.15"/></svg>
<svg style="left:209px;top:526px" width="8" height="9"><rect x="0" y="0.08" width="7.4" height="8.2" fill="#181818"/></svg>
<svg style="left:217px;top:526px" width="9" height="9"><rect x="0.9" y="0.08" width="7.4" height="8.2" fill="#181818"/></svg>
<svg style="left:226px;top:526px" width="8" height="9"><rect x="0.6" y="0.08" width="7.4" height="8.2" fill="#181818"/></svg>
<svg style="left:244px;top:525px" width="41" height="11"><rect x="0.3" y="0.48" width="40.7" height="10.48" fill="#1e1e1e"/></svg>
<span class="t" style="transform:scaleX(0.9286);left:248.5px;top:525.72px;font-size:7px;color:#d0d0d0;">正常</span>
<svg style="left:277px;top:528.9200000000001px;" width="7" height="5" viewBox="0 0 7 5"><path d="M0.3 0.3H6L3.1 3.6Z" fill="#d8d8d8"/></svg>
<svg style="left:287px;top:525px" width="9" height="10"><rect x="0.6" y="0.78" width="7.8" height="9" fill="#171717"/></svg>
<svg style="left:298px;top:525px" width="40" height="11"><rect x="0" y="0.48" width="40" height="10.48" fill="#1e1e1e"/></svg>
<span class="t" style="transform:scaleX(1.0429);left:302.7px;top:525.72px;font-size:7px;color:#d0d0d0;">无</span>
<svg style="left:329px;top:528.9200000000001px;" width="7" height="5" viewBox="0 0 7 5"><path d="M0.3 0.3H6L3.1 3.6Z" fill="#d8d8d8"/></svg>
<svg style="left:352px;top:526px" width="451" height="10"><rect x="0.8" y="0.08" width="450" height="9.4" fill="#565e96"/></svg>
<svg style="left:1px;top:536px" width="347" height="13"><rect x="0" y="0.56" width="347" height="11.68" fill="#262626"/></svg>
<svg style="left:4.5px;top:539.9px;" width="4" height="5" viewBox="0 0 4 5"><path d="M3.5 0.3V4.7L0.3 2.5Z" fill="#c0c0c0"/></svg>
<svg style="left:12.5px;top:539.4px;" width="6" height="6" viewBox="0 0 6 6"><path d="M3 0.2L5.8 3L3 5.8L0.2 3Z" fill="#2eb4f0"/></svg>
<svg style="left:22.5px;top:539.9px;" width="4" height="5" viewBox="0 0 4 5"><path d="M0.5 0.3V4.7L3.7 2.5Z" fill="#4a4a4a"/></svg>
<svg style="left:76.5px;top:538.4px;" width="8" height="8" viewBox="0 0 8 8"><circle cx="4" cy="4.5" r="2.6" fill="none" stroke="#2eaae6" stroke-width="1"/><path d="M4 4.5V3M2.8 0.9H5.2M6 2L6.8 1.2" stroke="#2eaae6" stroke-width="0.8" fill="none"/></svg>
<svg style="left:87px;top:538.9px;" width="8" height="7" viewBox="0 0 8 7"><path d="M0.8 0.5V6.2H7.2" stroke="#a0a0a0" stroke-width="0.8" fill="none"/><path d="M1.5 5L3 2.5L4.5 4L6.5 3" stroke="#a0a0a0" stroke-width="0.7" fill="none"/></svg>
<span class="t" style="transform:scaleX(0.9286);left:99px;top:537.4px;font-size:7px;color:#c0c0c0;text-decoration:underline;text-decoration-color:#888;">位置</span>
<span class="t" style="transform:scaleX(0.8598);left:165.8px;top:536.8px;font-size:7.6px;color:#2d9ad4;">240.0,537.0</span>
<svg style="left:353px;top:536px" width="450" height="13"><rect x="0.5" y="0.56" width="449" height="11.68" fill="#2f2f2f"/></svg>
<svg style="left:350.7px;top:538.8px;" width="6" height="6" viewBox="0 0 6 6"><path d="M3 0.3L5.7 3L3 5.7L0.3 3Z" fill="#b0b0b0"/></svg>
<svg style="left:477.4px;top:538.9px;" width="5.4" height="5.4" viewBox="0 0 5.4 5.4"><path d="M2.7 0.3L5.1 2.7L2.7 5.1L0.3 2.7Z" fill="#a8a8a8"/></svg>
<svg style="left:1px;top:548px" width="347" height="12"><rect x="0" y="0.64" width="347" height="10.88" fill="#2c2c2c"/></svg>
<svg style="left:3px;top:549px" width="9" height="10"><rect x="0" y="0.24" width="8.5" height="9" fill="#141414"/></svg>
<svg style="left:3.5px;top:550.24px;" width="8" height="7" viewBox="0 0 8 7"><path d="M0.5 3.5Q4 0.3 7.5 3.5Q4 6.7 0.5 3.5Z" fill="none" stroke="#b0b0b0" stroke-width="0.9"/><circle cx="4" cy="3.5" r="1.2" fill="#b0b0b0"/></svg>
<svg style="left:20px;top:549px" width="8" height="10"><rect x="0.5" y="0.24" width="7.5" height="9" fill="#161616"/></svg>
<svg style="left:29px;top:549px" width="8" height="10"><rect x="0.3" y="0.24" width="7.5" height="9" fill="#161616"/></svg>
<svg style="left:43px;top:551.08px;" width="6" height="6" viewBox="0 0 6 6"><path d="M0.5 0.5L5 3L0.5 5.5Z" fill="#c8c8c8"/></svg>
<svg style="left:50px;top:549px" width="10" height="10"><rect x="0" y="0.04" width="9.4" height="9.6" fill="#6b7ee0"/></svg>
<div style="left:61.6px;top:549.64px;width:7.2px;height:8px;background:#2a2a2a;border-radius:2px;"></div>
<span class="t" style="transform:scaleX(1.0340);left:62.4px;top:547.28px;font-size:5.6px;color:#f4f4f4;">★</span>
<span class="t" style="transform:scaleX(1.0342);left:74px;top:549.08px;font-size:7px;color:#d0d0d0;">形状图层 1</span>
<svg style="left:164px;top:549px" width="9" height="9"><rect x="0.7" y="0.44" width="7.6" height="8.2" fill="#161616"/></svg>
<svg style="left:173px;top:549px" width="9" height="9"><rect x="0.6" y="0.44" width="7.6" height="8.2" fill="#161616"/></svg>
<svg style="left:182px;top:549px" width="9" height="9"><rect x="0.5" y="0.44" width="7.6" height="8.2" fill="#161616"/></svg>
<svg style="left:165px;top:550.04px;" width="7" height="7" viewBox="0 0 7 7"><path d="M0.3 4.6A3.2 3.2 0 0 1 6.7 4.6L5.6 5.2L4.4 4.4V6.4H2.6V4.4L1.4 5.2Z" fill="#d0d0d0"/><path d="M2.2 3.2A1.4 1.4 0 0 1 4.8 3.2" stroke="#222" stroke-width="0.6" fill="none"/></svg>
<svg style="left:174px;top:550.04px;" width="7" height="7" viewBox="0 0 7 7"><circle cx="3.5" cy="3.5" r="1.3" fill="none" stroke="#6c6c6c" stroke-width="0.7"/><path d="M3.5 0.9V1.6M3.5 5.4V6.1M0.9 3.5H1.6M5.4 3.5H6.1M1.7 1.7L2.2 2.2M4.8 4.8L5.3 5.3M5.3 1.7L4.8 2.2M2.2 4.8L1.7 5.3" stroke="#6c6c6c" stroke-width="0.6"/></svg>
<svg style="left:183px;top:550.04px;" width="7" height="7" viewBox="0 0 7 7"><path d="M0.7 6.3L6.3 0.7" stroke="#d4d4d4" stroke-width="1.15"/></svg>
<svg style="left:209px;top:549px" width="8" height="9"><rect x="0" y="0.44" width="7.4" height="8.2" fill="#181818"/></svg>
<svg style="left:217px;top:549px" width="9" height="9"><rect x="0.9" y="0.44" width="7.4" height="8.2" fill="#181818"/></svg>
<svg style="left:226px;top:549px" width="8" height="9"><rect x="0.6" y="0.44" width="7.4" height="8.2" fill="#181818"/></svg>
<svg style="left:244px;top:548px" width="41" height="12"><rect x="0.3" y="0.84" width="40.7" height="10.48" fill="#1e1e1e"/></svg>
<span class="t" style="transform:scaleX(0.9286);left:248.5px;top:549.08px;font-size:7px;color:#d0d0d0;">正常</span>
<svg style="left:277px;top:552.2800000000001px;" width="7" height="5" viewBox="0 0 7 5"><path d="M0.3 0.3H6L3.1 3.6Z" fill="#d8d8d8"/></svg>
<svg style="left:287px;top:549px" width="9" height="10"><rect x="0.6" y="0.14" width="7.8" height="9" fill="#171717"/></svg>
<svg style="left:298px;top:548px" width="40" height="12"><rect x="0" y="0.84" width="40" height="10.48" fill="#1e1e1e"/></svg>
<span class="t" style="transform:scaleX(1.0429);left:302.7px;top:549.08px;font-size:7px;color:#d0d0d0;">无</span>
<svg style="left:329px;top:552.2800000000001px;" width="7" height="5" viewBox="0 0 7 5"><path d="M0.3 0.3H6L3.1 3.6Z" fill="#d8d8d8"/></svg>
<svg style="left:352px;top:549px" width="451" height="10"><rect x="0.8" y="0.44" width="450" height="9.4" fill="#565e96"/></svg>
<svg style="left:1px;top:559px" width="801" height="8"><rect x="0" y="0.92" width="801" height="7.08" fill="#262626"/></svg>
<svg style="left:348px;top:559px" width="2" height="8"><rect x="0" y="0.92" width="2" height="7.08" fill="#1a1a1a"/></svg>
<svg style="left:350px;top:559px" width="452" height="8"><rect x="0" y="0.92" width="452" height="7.08" fill="#2b2b2b"/></svg>
<svg style="left:479px;top:426px" width="2" height="5"><rect x="0.3" y="0" width="1.6" height="5" fill="rgba(100,180,225,0.85)"/></svg>
<svg style="left:479px;top:441px" width="2" height="13"><rect x="0.6" y="0" width="1" height="13" fill="rgba(70,170,225,0.9)"/></svg>
<svg style="left:479px;top:454px" width="2" height="113"><rect x="0.6" y="0" width="1" height="113" fill="rgba(45,150,210,0.7)"/></svg>
<svg style="left:476px;top:432px" width="8" height="2"><rect x="0.6" y="0.4" width="7.2" height="1" fill="#141414"/></svg>
<svg style="left:476px;top:433px;" width="8.4" height="10" viewBox="0 0 8.4 10"><path d="M1 0.3H7.4V4.4Q7.4 5.6 6.4 6.8L4.7 9Q4.2 9.5 3.7 9L2 6.8Q1 5.6 1 4.4Z" fill="#34b4f2"/><path d="M2.6 3H5.8" stroke="#c8ecff" stroke-width="0.8"/><path d="M3 4.7H5.4" stroke="#1a6a98" stroke-width="0.8"/></svg>
<svg style="left:0px;top:566px" width="802" height="3"><rect x="0" y="0.7" width="802" height="2.3" fill="#e8553f"/></svg>
<div style="left:3px;top:27px;width:1px;height:10px;background:#303030;"></div>
<div style="left:52px;top:26px;width:1px;height:12px;background:#2e2e2e;"></div>
<div style="left:147px;top:26px;width:1px;height:12px;background:#2e2e2e;"></div>
<div style="left:214px;top:26px;width:1px;height:12px;background:#2e2e2e;"></div>
<div style="left:245px;top:26px;width:1px;height:12px;background:#2e2e2e;"></div>
<svg style="left:9.5px;top:26.5px;" width="8" height="11" viewBox="0 0 8 11"><path d="M1 0.8V8.6L3 6.8L4.4 9.9L5.6 9.3L4.2 6.3H6.8Z" fill="none" stroke="#b4b4b4" stroke-width="0.8" stroke-linejoin="round"/></svg>
<svg style="left:22.5px;top:26.5px;" width="11" height="10.5" viewBox="0 0 11 10.5"><path d="M3 9.8C1.8 8.4 0.9 7.2 0.4 6.2C0.1 5.4 1 5 1.6 5.7L2.6 6.8L2 2.6a0.7 0.7 0 0 1 1.4 -0.2L4 4.8H4.4L4.3 1.2a0.7 0.7 0 0 1 1.4 0L5.8 4.8H6.2L6.6 1.6a0.7 0.7 0 0 1 1.4 0.2L7.6 5.2H8L8.8 3a0.7 0.7 0 0 1 1.3 0.4L9.4 7.2C9.2 8.4 8.8 9.2 8.2 9.8Z" fill="#b4b4b4"/></svg>
<svg style="left:38px;top:26.5px;" width="11" height="11" viewBox="0 0 11 11"><circle cx="3.8" cy="3.8" r="2.9" fill="#6a6a6a" stroke="#a0a0a0" stroke-width="1"/><path d="M6 6L9.2 9.2" stroke="#b0b0b0" stroke-width="1.5" stroke-linecap="round"/></svg>
<svg style="left:56.5px;top:26.5px;" width="11" height="11" viewBox="0 0 11 11"><path d="M5 1.6A3.7 3.7 0 1 0 8.6 4.2" fill="none" stroke="#b4b4b4" stroke-width="0.9" stroke-dasharray="1.2 0.5"/><path d="M3.6 0.4L5.8 1.7L3.8 3Z" fill="#b4b4b4"/></svg>
<svg style="left:70px;top:27.5px;" width="12" height="9" viewBox="0 0 12 9"><rect x="1" y="1" width="6.6" height="6" rx="1" fill="#808080" stroke="#a8a8a8" stroke-width="0.8"/><path d="M8 4L11.4 1.4V6.6Z" fill="#b4b4b4"/></svg>
<svg style="left:80.2px;top:36.2px;" width="2.4" height="2.4" viewBox="0 0 2.4 2.4"><path d="M2.2 0V2.2H0Z" fill="#b0b0b0"/></svg>
<svg style="left:85.5px;top:26.8px;" width="11.5" height="9.5" viewBox="0 0 11.5 9.5"><rect x="0.8" y="0.8" width="9.6" height="7.6" fill="none" stroke="#2fb0ee" stroke-width="1.1" stroke-dasharray="1.8 1.4"/><path d="M1.6 4.6L3.8 2.8V6.4ZM9.6 4.6L7.4 2.8V6.4Z" fill="#2fb0ee"/><rect x="4" y="3.4" width="3.2" height="2.4" fill="#0c0c0c"/></svg>
<svg style="left:104.5px;top:27.5px;" width="10" height="8.5" viewBox="0 0 10 8.5"><rect x="0.6" y="0.6" width="8.6" height="6.8" fill="#7c7c7c" stroke="#a8a8a8" stroke-width="0.8"/></svg>
<svg style="left:113.8px;top:36.2px;" width="2.4" height="2.4" viewBox="0 0 2.4 2.4"><path d="M2.2 0V2.2H0Z" fill="#b0b0b0"/></svg>
<svg style="left:119px;top:26.5px;" width="11" height="11" viewBox="0 0 11 11"><path d="M7.2 0.6L9.6 3L8.3 4.2L8 7.2L1.4 9.8L0.8 9.2L3.4 2.6L6.4 2.3Z" fill="#b4b4b4"/><path d="M1.2 9.4L4.6 6" stroke="#222" stroke-width="0.7"/><circle cx="5" cy="5.6" r="0.8" fill="#222"/></svg>
<svg style="left:128.6px;top:36.2px;" width="2.4" height="2.4" viewBox="0 0 2.4 2.4"><path d="M2.2 0V2.2H0Z" fill="#b0b0b0"/></svg>
<span class="t" style="transform:scaleX(1.2622);left:134.6px;top:26.0px;font-size:11px;color:#b4b4b4;font-family:'Liberation Serif',serif;">T</span>
<svg style="left:143.4px;top:36.2px;" width="2.4" height="2.4" viewBox="0 0 2.4 2.4"><path d="M2.2 0V2.2H0Z" fill="#b0b0b0"/></svg>
<svg style="left:151.5px;top:26.5px;" width="11" height="11" viewBox="0 0 11 11"><path d="M10 0.8L4.4 6.6" stroke="#b4b4b4" stroke-width="1" stroke-linecap="round"/><path d="M4.8 6.2L3.6 7.4C2.8 7.2 1.6 8 0.6 9.6C2.4 10 4 9.4 4.6 8.4L5.8 7.2Z" fill="#b4b4b4"/></svg>
<svg style="left:166.5px;top:26.5px;" width="11" height="11" viewBox="0 0 11 11"><path d="M4 0.8H6.6C7.2 2.2 6.4 3.4 6.2 5.4H9.2V7.6H1.4V5.4H4.4C4.2 3.4 3.4 2.2 4 0.8Z" fill="#b4b4b4"/><rect x="1.4" y="8.4" width="7.8" height="1.2" fill="#b4b4b4"/></svg>
<svg style="left:182px;top:26.5px;" width="11" height="11" viewBox="0 0 11 11"><path d="M5.2 1.6L10 3.4L6 8.6L1 6.8Z" fill="#b4b4b4"/><path d="M1 6.8L1 8.2L6 10L6 8.6" fill="#8a8a8a"/><path d="M3.8 3.4L8.6 5.2" stroke="#222" stroke-width="0.6"/></svg>
<svg style="left:199px;top:26.5px;" width="12" height="11" viewBox="0 0 12 11"><path d="M10.4 1L6 6" stroke="#b4b4b4" stroke-width="1" stroke-linecap="round"/><path d="M6.2 5.6L4.8 7C4 6.8 3 7.6 2.2 9.4C4 9.6 5.4 9 6 8L7.2 6.8Z" fill="#b4b4b4"/><path d="M1 2.2V5.6M2.6 1.6V6.2M0.6 3.6H3.8" stroke="#b4b4b4" stroke-width="0.7"/></svg>
<svg style="left:210px;top:36.2px;" width="2.4" height="2.4" viewBox="0 0 2.4 2.4"><path d="M2.2 0V2.2H0Z" fill="#b0b0b0"/></svg>
<svg style="left:219.5px;top:26.5px;" width="11" height="11" viewBox="0 0 11 11"><path d="M5.4 0.8L9.6 4.6L8.6 5.2L7.4 4.8L5.6 6.6L5.8 8L4.8 8.4L2.2 5.4L2.8 4.6L4.2 4.8L6 3L5 1.6Z" fill="#b4b4b4"/><path d="M3.6 7L0.8 10" stroke="#b4b4b4" stroke-width="0.9"/></svg>
<svg style="left:228.6px;top:36.2px;" width="2.4" height="2.4" viewBox="0 0 2.4 2.4"><path d="M2.2 0V2.2H0Z" fill="#b0b0b0"/></svg>
<svg style="left:266px;top:28px" width="8" height="9"><rect x="0" y="0.5" width="7.5" height="8" fill="#161616"/></svg>
<span class="t" style="transform:scaleX(0.9643);left:276px;top:27.5px;font-size:7px;color:#6a6a6a;">对齐</span>
<svg style="left:308.5px;top:27.5px;" width="10" height="10" viewBox="0 0 10 10"><path d="M1 8.2C2.4 6 3.8 5.4 4.4 5.4C5 5.4 6 6.4 7 8" fill="none" stroke="#b4b4b4" stroke-width="0.8"/><path d="M4.4 5.4L7.4 1.8" stroke="#b4b4b4" stroke-width="0.8"/><rect x="6.6" y="0.6" width="2.2" height="2.2" fill="#e0e0e0"/></svg>
<svg style="left:322.5px;top:27.5px;" width="9.5" height="9" viewBox="0 0 9.5 9"><path d="M0.6 2.6V0.6H3M5.8 0.6H8.2V2.6M8.2 5.4V7.6H5.8M3 7.6H0.6V5.4" fill="none" stroke="#2fa8e4" stroke-width="1.1"/><path d="M2.6 4.1H6.4" stroke="#2fa8e4" stroke-width="0.9" stroke-dasharray="1.2 0.8"/></svg>
<svg style="left:793px;top:25px" width="2" height="14"><rect x="0" y="0.5" width="1.5" height="13" fill="#1a1a1a"/></svg>
<svg style="left:27px;top:47px;" width="5" height="6" viewBox="0 0 5 6"><path d="M0 0.5H3.6M0 2.5H3.6M0 4.5H3.6" stroke="#8c8c8c" stroke-width="1" shape-rendering="crispEdges"/></svg>
<svg style="left:293px;top:47px;" width="5" height="6" viewBox="0 0 5 6"><path d="M0 0.5H3.6M0 2.5H3.6M0 4.5H3.6" stroke="#8c8c8c" stroke-width="1" shape-rendering="crispEdges"/></svg>
<svg style="left:77px;top:412px;" width="5" height="6" viewBox="0 0 5 6"><path d="M0 0.5H3.6M0 2.5H3.6M0 4.5H3.6" stroke="#8c8c8c" stroke-width="1" shape-rendering="crispEdges"/></svg>
<svg style="left:216px;top:45.5px;" width="6" height="7" viewBox="0 0 6 7"><rect x="0.6" y="3" width="4.4" height="3.2" fill="#d8d8d8"/><path d="M1.4 3V1.8A1.4 1.4 0 0 1 4.2 1.8" fill="none" stroke="#d8d8d8" stroke-width="0.8"/></svg>
<svg style="left:6px;top:124.3px;" width="12" height="9" viewBox="0 0 12 9"><circle cx="5.4" cy="3.2" r="2.5" fill="none" stroke="#b8b8b8" stroke-width="1"/><path d="M3.6 5L0.8 7.8" stroke="#b8b8b8" stroke-width="1.2"/><path d="M8 5.8H10.8L9.4 7.4Z" fill="#b8b8b8"/></svg>
<svg style="left:64.2px;top:427.7px;" width="12" height="9" viewBox="0 0 12 9"><circle cx="5.4" cy="3.2" r="2.5" fill="none" stroke="#b8b8b8" stroke-width="1"/><path d="M3.6 5L0.8 7.8" stroke="#b8b8b8" stroke-width="1.2"/><path d="M8 5.8H10.8L9.4 7.4Z" fill="#b8b8b8"/></svg>
<svg style="left:125px;top:141.5px;" width="8" height="5" viewBox="0 0 8 5"><path d="M0.3 0.4H7.3L3.8 4Z" fill="#8a8a8a"/></svg>
<svg style="left:9px;top:140px" width="1" height="8"><rect x="0" y="0.5" width="1" height="7" fill="#1a1a1a"/></svg>
<svg style="left:135px;top:140px" width="1" height="8"><rect x="0" y="0.5" width="1" height="7" fill="#1a1a1a"/></svg>
<svg style="left:147px;top:140px" width="2" height="8"><rect x="0.5" y="0.5" width="1" height="7" fill="#1a1a1a"/></svg>
<svg style="left:137px;top:140px;" width="9" height="9" viewBox="0 0 9 9"><path d="M4.6 0.8L8 0.6L7.8 4L4 7.8L0.8 4.6Z" fill="#b0b0b0"/><circle cx="6.4" cy="2.2" r="0.7" fill="#2a2a2a"/></svg>
<svg style="left:9.8px;top:150.8px;" width="9" height="9" viewBox="0 0 9 9"><rect x="0.4" y="0.4" width="8" height="7.8" fill="#3a3a3a" stroke="#9a9a9a" stroke-width="0.7"/><rect x="1.6" y="1.6" width="2.6" height="2.4" fill="#3a7ad8"/><rect x="4.4" y="1.6" width="2.6" height="2.4" fill="#d84a3a"/><rect x="1.6" y="4.2" width="2.6" height="2.6" fill="#4ab04a"/><rect x="4.4" y="4.2" width="2.6" height="2.6" fill="#d8b03a"/></svg>
<svg style="left:177.8px;top:151.2px;" width="9" height="8" viewBox="0 0 9 8"><rect x="3" y="0.4" width="3" height="2.6" fill="#c0c0c0"/><rect x="0.4" y="4.8" width="3" height="2.6" fill="#c0c0c0"/><rect x="5.6" y="4.8" width="3" height="2.6" fill="#c0c0c0"/><path d="M4.5 3V4M1.9 4.8V4H7.1V4.8" stroke="#c0c0c0" stroke-width="0.7" fill="none"/></svg>
<svg style="left:2px;top:394px;" width="12" height="9" viewBox="0 0 12 9"><rect x="3.4" y="0.6" width="7.6" height="5" fill="#9a9a9a"/><rect x="0.6" y="3" width="6.4" height="4.6" fill="#c0c0c0" stroke="#2a2a2a" stroke-width="0.5"/><path d="M2 4.6H5.6M2 6H5.6" stroke="#444" stroke-width="0.5"/></svg>
<svg style="left:18.5px;top:394.5px;" width="9" height="8" viewBox="0 0 9 8"><path d="M0.5 1H3.4L4.2 2H7.8V7H0.5Z" fill="#b8b8b8"/></svg>
<svg style="left:31px;top:394.5px;" width="11" height="8" viewBox="0 0 11 8"><rect x="0.5" y="0.5" width="10" height="6.6" fill="#b0b0b0"/><rect x="2.6" y="2" width="5.6" height="3.6" fill="#2a2a2a"/><path d="M3.4 5.2L5 3.4L6 4.4L6.8 3.8L7.8 5.2Z" fill="#c8c8c8"/></svg>
<svg style="left:76.5px;top:394px;" width="9" height="9" viewBox="0 0 9 9"><path d="M1 2H7.6M3.2 1.8V0.8H5.4V1.8" stroke="#a8a8a8" stroke-width="0.8" fill="none"/><path d="M1.6 2.8H7L6.4 8.2H2.2Z" fill="#8a8a8a"/></svg>
<svg style="left:192px;top:392.5px;" width="10" height="9" viewBox="0 0 10 9"><rect x="0.5" y="0.8" width="6.6" height="5" rx="0.8" fill="#8a8a8a"/><path d="M7.1 1.6L9.4 3.6V7.6L7.1 5.8Z" fill="#6a6a6a"/><path d="M0.8 5.8L3 7.8H9.4L7.1 5.8Z" fill="#767676"/><path d="M2.8 2L5 3.3L2.8 4.6Z" fill="#d8d8d8"/></svg>
<svg style="left:204.5px;top:392.5px;" width="10" height="9" viewBox="0 0 10 9"><rect x="0.5" y="0.5" width="8.6" height="5.8" rx="0.6" fill="#727272"/><rect x="1.2" y="1.2" width="7.2" height="3.6" fill="#5e5e5e"/><rect x="2.6" y="6.6" width="4.4" height="1.1" fill="#727272"/></svg>
<svg style="left:248.6px;top:395.59999999999997px;" width="5.8" height="4" viewBox="0 0 5.8 4"><path d="M0.2 0.2H5.2L2.7 3.4Z" fill="#d8d8d8"/></svg>
<div style="left:216px;top:391px;width:1px;height:12px;background:#1c1c1c;"></div>
<svg style="left:256px;top:391px" width="2" height="12"><rect x="0.5" y="0" width="1" height="12" fill="#1c1c1c"/></svg>
<div style="left:283px;top:391px;width:1px;height:12px;background:#1c1c1c;"></div>
<svg style="left:323px;top:391px" width="2" height="12"><rect x="0.5" y="0" width="1" height="12" fill="#1c1c1c"/></svg>
<div style="left:362px;top:391px;width:1px;height:12px;background:#1c1c1c;"></div>
<div style="left:413px;top:391px;width:1px;height:12px;background:#1c1c1c;"></div>
<div style="left:438px;top:391px;width:1px;height:12px;background:#1c1c1c;"></div>
<svg style="left:501px;top:391px" width="2" height="12"><rect x="0.5" y="0" width="1" height="12" fill="#1c1c1c"/></svg>
<div style="left:543px;top:391px;width:1px;height:12px;background:#1c1c1c;"></div>
<svg style="left:258.5px;top:392.5px;" width="10.5" height="9" viewBox="0 0 10.5 9"><rect x="1" y="1.4" width="7.6" height="5" fill="none" stroke="#c0c0c0" stroke-width="0.8"/><path d="M4.8 0.4V2.4M4.8 5.4V7.4M0 3.9H2M7.6 3.9H9.6" stroke="#c0c0c0" stroke-width="0.7"/><path d="M8.4 7H10V8.4Z" fill="#c0c0c0"/></svg>
<svg style="left:271.5px;top:392.5px;" width="10" height="9" viewBox="0 0 10 9"><path d="M2 1.4L8 0.8L8.2 6.6L1 6.8Z" fill="none" stroke="#2fa8e4" stroke-width="0.9"/><circle cx="2" cy="1.4" r="0.8" fill="#2fa8e4"/><circle cx="8" cy="0.8" r="0.8" fill="#2fa8e4"/><circle cx="8.2" cy="6.6" r="0.8" fill="#2fa8e4"/><circle cx="1" cy="6.8" r="0.8" fill="#2fa8e4"/></svg>
<svg style="left:325.5px;top:393px;" width="10" height="8" viewBox="0 0 10 8"><rect x="0.5" y="1.6" width="8.4" height="5.4" rx="0.6" fill="#a8a8a8"/><rect x="2.6" y="0.6" width="3" height="1.4" fill="#a8a8a8"/><circle cx="4.7" cy="4.4" r="1.6" fill="#333"/></svg>
<svg style="left:338px;top:392.5px;" width="11" height="9" viewBox="0 0 11 9"><ellipse cx="3.6" cy="5.4" rx="2.8" ry="1.9" transform="rotate(-30 3.6 5.4)" fill="none" stroke="#666" stroke-width="0.9"/><ellipse cx="6.8" cy="3.4" rx="2.8" ry="1.9" transform="rotate(-30 6.8 3.4)" fill="none" stroke="#666" stroke-width="0.9"/></svg>
<svg style="left:351px;top:392.5px;" width="11" height="9" viewBox="0 0 11 9"><circle cx="4.6" cy="2.6" r="2" fill="#f01818"/><circle cx="3" cy="5.4" r="2" fill="#18c818"/><circle cx="6.2" cy="5.4" r="2" fill="#3a6af0"/><path d="M8.4 7H10V8.4Z" fill="#c0c0c0"/></svg>
<svg style="left:404.5px;top:395.59999999999997px;" width="5.8" height="4" viewBox="0 0 5.8 4"><path d="M0.2 0.2H5.2L2.7 3.4Z" fill="#d8d8d8"/></svg>
<svg style="left:415px;top:393px;" width="10" height="8.5" viewBox="0 0 10 8.5"><rect x="0.6" y="0.6" width="8.2" height="6.8" fill="#333" stroke="#9a9a9a" stroke-width="0.7"/><rect x="3" y="2.8" width="3.4" height="2.4" fill="none" stroke="#888" stroke-width="0.6"/></svg>
<svg style="left:427.5px;top:393px;" width="10" height="8" viewBox="0 0 10 8"><rect x="0.4" y="0.4" width="9" height="6.4" fill="#d8d8d8"/><path d="M0.4 0.4h2.25v1.6h-2.25zM4.9 0.4h2.25v1.6h-2.25zM2.65 2h2.25v1.6h-2.25zM7.15 2h2.25v1.6h-2.25zM0.4 3.6h2.25v1.6h-2.25zM4.9 3.6h2.25v1.6h-2.25zM2.65 5.2h2.25v1.6h-2.25zM7.15 5.2h2.25v1.6h-2.25z" fill="#555"/></svg>
<svg style="left:492.5px;top:395.59999999999997px;" width="5.8" height="4" viewBox="0 0 5.8 4"><path d="M0.2 0.2H5.2L2.7 3.4Z" fill="#d8d8d8"/></svg>
<svg style="left:535px;top:395.59999999999997px;" width="5.8" height="4" viewBox="0 0 5.8 4"><path d="M0.2 0.2H5.2L2.7 3.4Z" fill="#d8d8d8"/></svg>
<svg style="left:544.5px;top:393px;" width="10" height="8.5" viewBox="0 0 10 8.5"><path d="M0.6 0.6V2.4M8.6 0.6V2.4M0.6 1.5H8.6" stroke="#d0d0d0" stroke-width="0.8"/><rect x="2" y="3.6" width="5.4" height="3.6" fill="#c8c8c8"/></svg>
<svg style="left:557.5px;top:392.5px;" width="10" height="9" viewBox="0 0 10 9"><rect x="0.6" y="0.6" width="8.2" height="7" fill="none" stroke="#c8c8c8" stroke-width="0.8"/><path d="M4.7 2.4V6M2.8 4.2H6.6" stroke="#c8c8c8" stroke-width="0.9"/><path d="M8 7.6H9.6V9Z" fill="#c0c0c0"/></svg>
<svg style="left:570.5px;top:393px;" width="10" height="8.5" viewBox="0 0 10 8.5"><rect x="0.5" y="2.4" width="8.6" height="4.8" fill="#b8b8b8"/><rect x="3" y="0.6" width="3.6" height="2" fill="#b8b8b8"/><path d="M2.4 3.6V6M4.8 3.6V6M7.2 3.6V6" stroke="#333" stroke-width="0.6"/></svg>
<svg style="left:583.2px;top:393.3px;" width="9" height="8" viewBox="0 0 9 8"><rect x="3" y="0.4" width="3" height="2.6" fill="#c8c8c8"/><rect x="0.4" y="4.8" width="3" height="2.6" fill="#c8c8c8"/><rect x="5.6" y="4.8" width="3" height="2.6" fill="#c8c8c8"/><path d="M4.5 3V4M1.9 4.8V4H7.1V4.8" stroke="#c8c8c8" stroke-width="0.7" fill="none"/></svg>
<svg style="left:597px;top:392.5px;" width="10" height="10" viewBox="0 0 10 10"><circle cx="4.8" cy="4.8" r="4.2" fill="#c8c8c8"/><circle cx="4.8" cy="4.8" r="1.5" fill="#333"/><path d="M4.8 0.6V3.2M4.8 6.4V9M0.6 4.8H3.2M6.4 4.8H9" stroke="#333" stroke-width="0.5"/></svg>
<svg style="left:2.5px;top:446px;" width="9" height="7" viewBox="0 0 9 7"><path d="M0.5 3.5Q4.2 0.2 8 3.5Q4.2 6.8 0.5 3.5Z" fill="none" stroke="#b0b0b0" stroke-width="0.9"/><circle cx="4.2" cy="3.5" r="1.2" fill="#b0b0b0"/></svg>
<svg style="left:12px;top:445.8px;" width="8" height="8" viewBox="0 0 8 8"><path d="M0.4 2.8H2L4.2 0.8V7.2L2 5.2H0.4Z" fill="#b0b0b0"/><path d="M5.4 2.2Q6.6 4 5.4 5.8" fill="none" stroke="#888" stroke-width="0.7"/></svg>
<svg style="left:22px;top:447.2px;" width="5" height="5" viewBox="0 0 5 5"><circle cx="2.4" cy="2.4" r="2.1" fill="#c0c0c0"/></svg>
<svg style="left:30px;top:445.8px;" width="6" height="8" viewBox="0 0 6 8"><rect x="0.4" y="3.2" width="5" height="4" fill="#b8b8b8"/><path d="M1.4 3.2V2.2A1.5 1.5 0 0 1 4.4 2.2V3.2" fill="none" stroke="#b8b8b8" stroke-width="0.9"/></svg>
<svg style="left:40px;top:446px" width="2" height="7"><rect x="0.5" y="0" width="1" height="7" fill="#1a1a1a"/></svg>
<div style="left:60px;top:446px;width:1px;height:7px;background:#1a1a1a;"></div>
<svg style="left:162px;top:446px" width="2" height="7"><rect x="0.5" y="0" width="1" height="7" fill="#1a1a1a"/></svg>
<svg style="left:242px;top:446px" width="2" height="7"><rect x="0.5" y="0" width="1" height="7" fill="#1a1a1a"/></svg>
<svg style="left:339px;top:446px" width="2" height="7"><rect x="0.5" y="0" width="1" height="7" fill="#1a1a1a"/></svg>
<svg style="left:47.8px;top:444.8px;" width="9" height="9" viewBox="0 0 9 9"><path d="M4.6 0.8L8 0.6L7.8 4L4 7.8L0.8 4.6Z" fill="#b0b0b0"/><circle cx="6.4" cy="2.2" r="0.7" fill="#2a2a2a"/></svg>
<svg style="left:165.3px;top:446.2px;" width="7" height="7" viewBox="0 0 7 7"><path d="M0.3 4.6A3.2 3.2 0 0 1 6.7 4.6L5.6 5.2L4.4 4.4V6.4H2.6V4.4L1.4 5.2Z" fill="#c0c0c0"/><path d="M2.2 3.2A1.4 1.4 0 0 1 4.8 3.2" stroke="#2a2a2a" stroke-width="0.6" fill="none"/></svg>
<svg style="left:173.8px;top:446.2px;" width="7" height="7" viewBox="0 0 7 7"><circle cx="3.5" cy="3.5" r="1.3" fill="none" stroke="#b0b0b0" stroke-width="0.8"/><path d="M3.5 0.7V1.5M3.5 5.5V6.3M0.7 3.5H1.5M5.5 3.5H6.3M1.5 1.5L2.1 2.1M4.9 4.9L5.5 5.5M5.5 1.5L4.9 2.1M2.1 4.9L1.5 5.5" stroke="#b0b0b0" stroke-width="0.7"/></svg>
<svg style="left:182px;top:446px;" width="8" height="8" viewBox="0 0 8 8"><path d="M0.8 0.8L6.8 6.8" stroke="#b0b0b0" stroke-width="0.8"/></svg>
<span class="t" style="transform:scaleX(1.1200);left:191.3px;top:444.2px;font-size:7.5px;color:#c8c8c8;font-weight:bold;font-family:'Liberation Serif',serif;font-style:italic;">fx</span>
<svg style="left:200px;top:446px;" width="8" height="8" viewBox="0 0 8 8"><rect x="0.6" y="0.4" width="6.4" height="6.8" fill="#b0b0b0"/><path d="M2.2 1.6H5.4M2.2 3.2H5.4M2.2 4.8H5.4" stroke="#333" stroke-width="0.6"/></svg>
<svg style="left:209px;top:446px;" width="8" height="8" viewBox="0 0 8 8"><ellipse cx="3.8" cy="3.8" rx="3.2" ry="1.8" transform="rotate(-40 3.8 3.8)" fill="#a8a8a8"/><ellipse cx="3.8" cy="3.8" rx="1.6" ry="0.6" transform="rotate(-40 3.8 3.8)" fill="#333"/></svg>
<svg style="left:217.5px;top:446px;" width="8" height="8" viewBox="0 0 8 8"><circle cx="3.8" cy="3.8" r="3.1" fill="#e8e8e8"/><path d="M3.8 1.2A2.6 2.6 0 0 0 3.8 6.4Z" fill="#111" transform="rotate(45 3.8 3.8)"/></svg>
<svg style="left:226.5px;top:445.6px;" width="8.4" height="8.4" viewBox="0 0 8.4 8.4"><path d="M4.2 0.6L7.4 2.2V6L4.2 7.8L1 6V2.2Z" fill="none" stroke="#b0b0b0" stroke-width="0.7"/><path d="M1 2.2L4.2 3.9L7.4 2.2M4.2 3.9V7.8" fill="none" stroke="#b0b0b0" stroke-width="0.6"/></svg>
<svg style="left:239.5px;top:428.5px;opacity:0.82;" width="11" height="9" viewBox="0 0 11 9"><path d="M0.6 2.4H8M6 2.4V6.6H10M8 6.6" stroke="#c0c0c0" stroke-width="0.9" fill="none"/><rect x="7" y="1.2" width="2.4" height="2.4" fill="#c0c0c0"/><rect x="8.2" y="5.4" width="2.4" height="2.4" fill="#c0c0c0"/></svg>
<svg style="left:258px;top:427.5px;opacity:0.82;" width="12" height="11" viewBox="0 0 12 11"><circle cx="3" cy="2.6" r="2" fill="#a8a8a8"/><path d="M7.2 3.6L10.6 5.2V8.6L7.2 10.2L3.8 8.6V5.2Z" fill="none" stroke="#b8b8b8" stroke-width="0.8"/><path d="M3.8 5.2L7.2 6.9L10.6 5.2M7.2 6.9V10.2" fill="none" stroke="#b8b8b8" stroke-width="0.6"/></svg>
<svg style="left:278px;top:428.0px;opacity:0.82;" width="12" height="10" viewBox="0 0 12 10"><path d="M1.2 6.4A4.6 4.6 0 0 1 10.4 6.4Z" fill="#b0b0b0"/><rect x="1" y="7.4" width="9.6" height="1.8" fill="#b0b0b0"/><circle cx="5.8" cy="4.4" r="1" fill="#222"/><path d="M5.8 4.4V7" stroke="#222" stroke-width="0.7"/></svg>
<svg style="left:294px;top:428.0px;opacity:0.82;" width="10" height="10" viewBox="0 0 10 10"><rect x="3" y="0.6" width="6" height="7.2" fill="#a0a0a0"/><rect x="0.8" y="2.6" width="5.4" height="6.8" fill="#c0c0c0" stroke="#262626" stroke-width="0.5"/><path d="M5 1V8" stroke="#333" stroke-width="0.6"/></svg>
<svg style="left:309.5px;top:428.0px;opacity:0.82;" width="11" height="10" viewBox="0 0 11 10"><ellipse cx="5.4" cy="5" rx="4.8" ry="2.8" transform="rotate(-35 5.4 5)" fill="#a8a8a8"/><ellipse cx="6.4" cy="4.3" rx="2" ry="1.1" transform="rotate(-35 6.4 4.3)" fill="#444"/></svg>
<svg style="left:329.5px;top:428.0px;opacity:0.82;" width="11" height="10" viewBox="0 0 11 10"><rect x="0.8" y="2.4" width="9" height="6.6" fill="#b0b0b0"/><path d="M2.4 1V3M5.2 1V3M8 1V3" stroke="#b0b0b0" stroke-width="0.8"/><path d="M1.6 4.4C4 4.4 6 7.6 9.2 7.6" stroke="#333" stroke-width="0.8" fill="none"/></svg>
</div></body></html>
